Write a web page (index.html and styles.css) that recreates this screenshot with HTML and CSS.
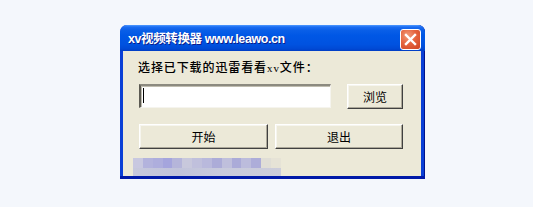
FILE: index.html
```html
<!DOCTYPE html>
<html>
<head>
<meta charset="utf-8">
<link rel="stylesheet" href="styles.css">
</head>
<body>
<div class="window">
  <div class="titlebar">
    <span class="title">xv视频转换器 www.leawo.cn</span>
    <span class="close"><svg width="13" height="13" viewBox="0 0 13 13"><path d="M2 2 L11 11 M11 2 L2 11" stroke="#fff" stroke-width="2.4" stroke-linecap="square"/></svg></span>
  </div>
  <div class="content">
    <div class="label">选择已下载的迅雷看看<span class="xv">xv</span>文件：</div>
    <div class="row">
      <div class="input"><span class="caret"></span></div>
      <div class="btn browse">浏览</div>
    </div>
    <div class="row buttons">
      <div class="btn wide">开始</div>
      <div class="btn wide2">退出</div>
    </div>
    <div class="blur">
      <div class="brow top">
        <i style="background:#c8c8e0"></i><i style="background:#b3b3dd"></i><i style="background:#aeaedd"></i><i style="background:#a5a5dd"></i><i style="background:#b5b5da"></i><i style="background:#c8c8dc"></i><i style="background:#c0c0dc"></i><i style="background:#b9b9dc"></i><i style="background:#acacd8"></i><i style="background:#bfbfdc"></i><i style="background:#ababd8"></i><i style="background:#bcbcdc"></i><i style="background:#adadd9"></i><i style="background:#e0ded6"></i><i style="background:#e6e3d6"></i>
      </div>
      <div class="brow bottom"></div>
    </div>
  </div>
</div>
</body>
</html>
```
FILE: styles.css
```css
html, body {
  margin: 0;
  padding: 0;
  background: #f4f7fc;
}
body {
  width: 533px;
  height: 207px;
  overflow: hidden;
}
.window {
  margin: 25px 0 0 120px;
  width: 305px;
  height: 154px;
  box-sizing: border-box;
  background: #0a3fd6;
  border-radius: 7px 7px 0 0;
  padding: 0 4px 3px 3px;
  display: flex;
  flex-direction: column;
  box-shadow: inset 0 -3px 0 #0019a8, inset -1px 0 0 #00138c;
}
.titlebar {
  height: 28px;
  margin: 0 -4px 0 -3px;
  border-radius: 7px 7px 0 0;
  background: linear-gradient(#4f9bff 0, #1a6cf2 2px, #0a5fe8 5px, #0057e5 40%, #0052e0 75%, #0049d4 92%, #003cc4 100%);
  display: flex;
  align-items: center;
  padding: 0 4px 0 8px;
  box-sizing: border-box;
}
.title {
  flex: 1;
  color: #fff;
  font: bold 12.5px "Liberation Sans", "Noto Sans CJK SC", sans-serif;
  text-shadow: 1px 1px 0 #0a1e8c;
  letter-spacing: -0.4px;
  padding-bottom: 1px;
}
.close {
  width: 21px;
  height: 21px;
  box-sizing: border-box;
  border: 1px solid #fff;
  border-radius: 3px;
  background: radial-gradient(circle at 35% 30%, #f29c7c 0, #e5643e 45%, #cf4320 100%);
  display: flex;
  align-items: center;
  justify-content: center;
  margin-top: 3px;
}
.content {
  flex: 1;
  background: #ece9d8;
  display: flex;
  flex-direction: column;
  font: 12px "Noto Sans CJK SC", sans-serif;
  color: #000;
}
.label {
  margin: 9px 0 0 15px;
  line-height: 14px;
  height: 14px;
  font-weight: 500;
  letter-spacing: 0.9px;
}
.xv {
  font-family: "Liberation Serif", serif;
  font-size: 11px;
}
.row {
  display: flex;
  margin: 10px 0 0 16px;
  align-items: flex-start;
}
.input {
  width: 192px;
  height: 24px;
  box-sizing: border-box;
  background: #fff;
  border-style: solid;
  border-width: 2px 1px 1px 2px;
  border-color: #8c8a80 #f5f4ee #f5f4ee #5c5a52;
  box-shadow: inset 1px 1px 0 #c0bdb0;
  padding: 2px 0 0 1px;
}
.caret {
  display: block;
  width: 1px;
  height: 15px;
  background: #000;
  margin-left: 1px;
}
.btn {
  box-sizing: border-box;
  height: 25px;
  background: #ece9d8;
  border-style: solid;
  border-width: 1px;
  border-color: #fff #404040 #404040 #fff;
  box-shadow: inset -1px -1px 0 #aca899, inset 1px 1px 0 #f6f5ee;
  display: flex;
  align-items: center;
  justify-content: center;
  line-height: 14px;
}
.browse {
  width: 56px;
  margin-left: 16px;
}
.buttons {
  margin-top: 15px;
}
.wide {
  width: 129px;
}
.wide2 {
  width: 128px;
  margin-left: 7px;
}
.blur {
  margin: 9px 0 0 10px;
  width: 148px;
  display: flex;
  flex-direction: column;
}
.brow {
  display: flex;
}
.brow.top {
  height: 10px;
}
.brow.top i {
  display: block;
  width: 10px;
  height: 10px;
}
.brow.bottom {
  height: 8px;
  background: linear-gradient(90deg, #c6c8dc 0, #c1c3da 30%, #c8cadc 60%, #cccdda 100%);
}
```
